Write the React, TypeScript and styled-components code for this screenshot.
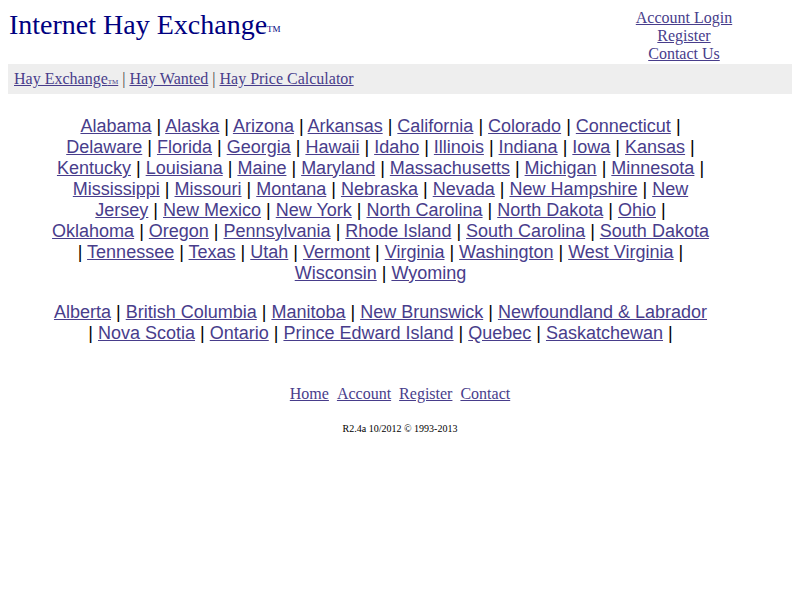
import React from "react";
import styled, { createGlobalStyle } from "styled-components";

const Global = createGlobalStyle`
  body {
    margin: 8px;
    background: #ffffff;
    font-family: "Liberation Serif", "Times New Roman", serif;
    color: #000000;
  }
  a { color: #483d8b; }
`;

const Header = styled.header`
  display: flex;
  justify-content: space-between;
  align-items: flex-start;
  height: 56px;
`;

const Title = styled.h1`
  margin: 0;
  padding: 0 0 0 1px;
  font-weight: normal;
  font-size: 28px;
  line-height: 34px;
  color: #000080;
`;

const Tm = styled.span<{ $size?: number }>`
  font-size: ${(p) => p.$size ?? 9}px;
  vertical-align: ${(p) => (p.$size ? "0" : "2px")};
`;

const AccountLinks = styled.div`
  width: 216px;
  padding-top: 1px;
  font-size: 16px;
  line-height: 18px;
  display: flex;
  flex-direction: column;
  align-items: center;
`;

const NavBar = styled.nav`
  background: #eeeeee;
  height: 30px;
  display: flex;
  align-items: center;
  padding: 0 6px;
  font-size: 16px;
  white-space: pre;
  color: #444;
`;

const StatesArea = styled.main`
  margin: 22px 0 0 44px;
  width: 657px;
  text-align: center;
  font-family: "Liberation Sans", Arial, sans-serif;
  font-size: 18px;
  line-height: 21px;
`;

const Para = styled.p`
  margin: 0 0 18px 0;
`;

const Footer = styled.footer`
  margin-top: 41px;
  text-align: center;
  font-size: 16px;
`;

const FooterLinks = styled.div`
  display: flex;
  justify-content: center;
  gap: 8px;
  line-height: 18px;
`;

const Copy = styled.div`
  margin-top: 20px;
  font-size: 10px;
  line-height: 12px;
`;

const states = [
  "Alabama", "Alaska", "Arizona", "Arkansas", "California", "Colorado", "Connecticut",
  "Delaware", "Florida", "Georgia", "Hawaii", "Idaho", "Illinois", "Indiana", "Iowa", "Kansas",
  "Kentucky", "Louisiana", "Maine", "Maryland", "Massachusetts", "Michigan", "Minnesota",
  "Mississippi", "Missouri", "Montana", "Nebraska", "Nevada", "New Hampshire", "New Jersey",
  "New Mexico", "New York", "North Carolina", "North Dakota", "Ohio", "Oklahoma", "Oregon",
  "Pennsylvania", "Rhode Island", "South Carolina", "South Dakota", "Tennessee", "Texas",
  "Utah", "Vermont", "Virginia", "Washington", "West Virginia", "Wisconsin", "Wyoming",
];

const provinces = [
  "Alberta", "British Columbia", "Manitoba", "New Brunswick", "Newfoundland & Labrador",
  "Nova Scotia", "Ontario", "Prince Edward Island", "Quebec", "Saskatchewan",
];

function LinkList({ items, trailing }: { items: string[]; trailing: boolean }) {
  return (
    <Para>
      {items.map((s, i) => (
        <React.Fragment key={s}>
          <a href="#">{s}</a>
          {i < items.length - 1 || trailing ? " | " : ""}
        </React.Fragment>
      ))}
    </Para>
  );
}

export default function App() {
  return (
    <>
      <Global />
      <Header>
        <Title>
          Internet Hay Exchange<Tm>TM</Tm>
        </Title>
        <AccountLinks>
          <a href="#">Account Login</a>
          <a href="#">Register</a>
          <a href="#">Contact Us</a>
        </AccountLinks>
      </Header>
      <NavBar>
        <a href="#">
          Hay Exchange<Tm $size={7}>TM</Tm>
        </a>
        {" | "}
        <a href="#">Hay Wanted</a>
        {" | "}
        <a href="#">Hay Price Calculator</a>
      </NavBar>
      <StatesArea>
        <LinkList items={states} trailing={false} />
        <LinkList items={provinces} trailing={true} />
      </StatesArea>
      <Footer>
        <FooterLinks>
          <a href="#">Home</a>
          <a href="#">Account</a>
          <a href="#">Register</a>
          <a href="#">Contact</a>
        </FooterLinks>
        <Copy>R2.4a 10/2012 © 1993-2013</Copy>
      </Footer>
    </>
  );
}
